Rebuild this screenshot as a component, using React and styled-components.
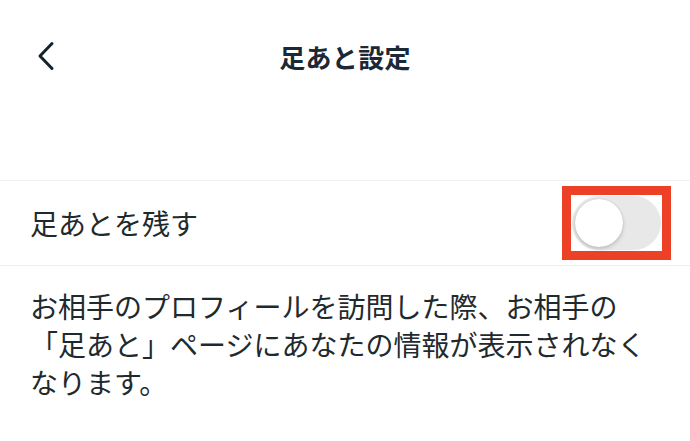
import React, { useState } from 'react';
import styled, { createGlobalStyle } from 'styled-components';

const GlobalStyle = createGlobalStyle`
  * { box-sizing: border-box; }
  html, body {
    margin: 0;
    padding: 0;
    background: #ffffff;
    font-family: "Noto Sans CJK JP", "Noto Sans", sans-serif;
  }
`

const App = () => {
  const [on, setOn] = useState(false)

  return (
    <>
      <GlobalStyle />
      <Page>
        <Header>
          <BackBtn aria-label="戻る">
            <svg width="18" height="30" viewBox="0 0 18 30" fill="none">
              <path d="M15 2.5 L3 15 L15 27.5" stroke="#14232b" strokeWidth="3" strokeLinecap="round" strokeLinejoin="round" />
            </svg>
          </BackBtn>
          <Title>足あと設定</Title>
        </Header>
        <Row>
          <RowLabel>足あとを残す</RowLabel>
          <Highlight>
            <Track $on={on} onClick={() => setOn(!on)}>
              <Knob $on={on} />
            </Track>
          </Highlight>
        </Row>
        <Description>
          お相手のプロフィールを訪問した際、お相手の「足あと」ページにあなたの情報が表示されなくなります。
        </Description>
      </Page>
    </>
  )
}

export default App;

const Page = styled.div`
  width: 690px;
  min-height: 441px;
  background: #ffffff;
`
const Header = styled.div`
  position: relative;
  height: 112px;
  display: flex;
  align-items: center;
  justify-content: center;
  margin-bottom: 68px;
`
const BackBtn = styled.button`
  position: absolute;
  left: 37px;
  top: 41px;
  width: 18px;
  height: 30px;
  padding: 0;
  border: none;
  background: none;
  cursor: pointer;
  display: flex;
`
const Title = styled.div`
  font-size: 26px;
  font-weight: 700;
  color: #1b2836;
  letter-spacing: 0.3px;
`
const Row = styled.div`
  height: 86px;
  border-top: 1px solid #f1f1f1;
  border-bottom: 1px solid #ededed;
  display: flex;
  align-items: center;
  justify-content: space-between;
  padding: 0 19px 0 30px;
`
const RowLabel = styled.div`
  font-size: 28px;
  color: #1f2a2e;
`
const Highlight = styled.div`
  border: 9px solid #ec4127;
  padding: 1px 1px 1px 1px;
  display: flex;
`
const Track = styled.div`
  width: 89px;
  height: 54px;
  border-radius: 27px;
  background: ${p => (p.$on ? '#4cd964' : '#e8e8e8')};
  position: relative;
  cursor: pointer;
`
const Knob = styled.div`
  position: absolute;
  top: 3px;
  left: ${p => (p.$on ? '38px' : '3px')};
  width: 48px;
  height: 48px;
  border-radius: 50%;
  background: #ffffff;
  box-shadow: 0 2px 4px rgba(0, 0, 0, 0.18), 0 0 1px rgba(0, 0, 0, 0.2);
`
const Description = styled.p`
  margin: 0;
  padding: 21px 30px 0 30px;
  font-size: 28px;
  line-height: 38px;
  color: #1f2a2e;
`
